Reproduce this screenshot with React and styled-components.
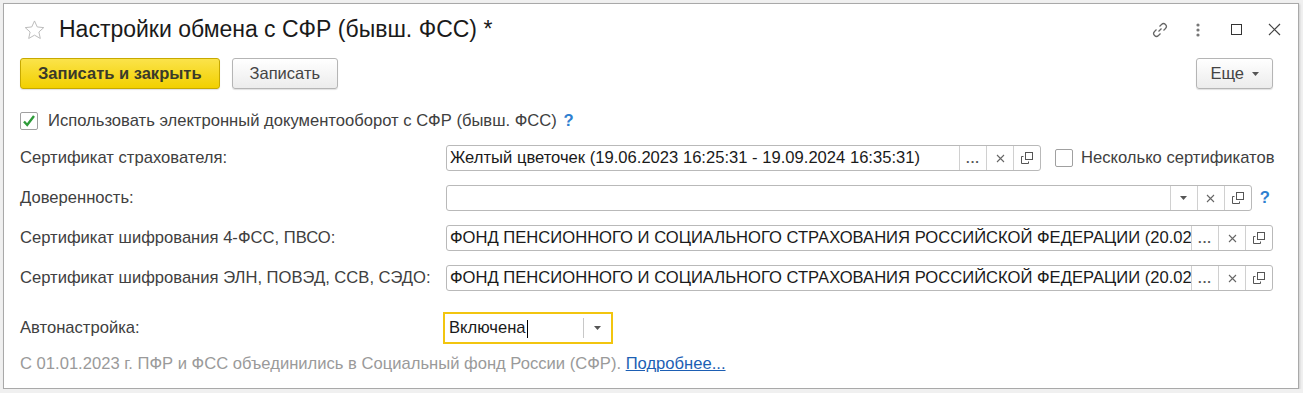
import React from "react";
import styled, { createGlobalStyle } from "styled-components";

const Global = createGlobalStyle`
  html, body {
    margin: 0;
    padding: 0;
    background: #f0f0f0;
    font-family: "Liberation Sans", Arial, sans-serif;
  }
`;

const Window = styled.div`
  margin: 3px 0 0 3px;
  width: 1296px;
  height: 386px;
  background: #fff;
  border: 1px solid #a9a9a9;
  box-shadow: 1px 1px 2px rgba(0, 0, 0, 0.15);
  padding: 0 25px 0 16px;
  box-sizing: border-box;
  color: #404040;
  font-size: 16.6px;
`;

const TitleBar = styled.div`
  display: flex;
  align-items: center;
  height: 51px;
  box-sizing: border-box;
`;

const Title = styled.div`
  flex: 1;
  margin-left: 14px;
  font-size: 23px;
  color: #1a1a1a;
  white-space: nowrap;
`;

const WinIcons = styled.div`
  display: flex;
  align-items: center;
  margin-right: -20px;
`;

const WinIcon = styled.div`
  width: 38px;
  height: 24px;
  display: flex;
  align-items: center;
  justify-content: center;
`;

const Toolbar = styled.div`
  display: flex;
  align-items: center;
  gap: 12px;
  height: 31px;
  margin-top: 3px;
`;

const Button = styled.button`
  height: 31px;
  padding: 0 ${(p) => p.$pad || 16}px;
  font-family: inherit;
  font-size: 16.5px;
  border-radius: 3px;
  cursor: pointer;
  border: 1px solid ${(p) => (p.$primary ? "#c7a900" : "#b5b5b5")};
  background: ${(p) =>
    p.$primary
      ? "linear-gradient(#fbe34a, #f2d000)"
      : "linear-gradient(#ffffff, #ececec)"};
  color: ${(p) => (p.$primary ? "#3a3a2a" : "#444")};
  font-weight: ${(p) => (p.$primary ? "bold" : "normal")};
  box-shadow: 0 1px 1px rgba(0, 0, 0, 0.12);
  display: flex;
  align-items: center;
  gap: 8px;
`;

const Spacer = styled.div`
  flex: 1;
`;

const CheckRow = styled.label`
  display: flex;
  align-items: center;
  height: 18px;
  margin-top: 23px;
  gap: 10px;
`;

const Box = styled.span`
  width: 16px;
  height: 16px;
  border: 1px solid #a0a0a0;
  border-radius: 2px;
  background: #fff;
  display: inline-flex;
  align-items: center;
  justify-content: center;
  flex-shrink: 0;
`;

const Help = styled.span`
  color: #2f7fd0;
  font-weight: bold;
  margin-left: 2px;
`;

const Form = styled.div`
  display: grid;
  grid-template-columns: 426px minmax(0, 1fr);
  row-gap: 14px;
  margin-top: 15px;
  align-items: center;
`;

const Label = styled.div`
  white-space: nowrap;
`;

const FieldLine = styled.div`
  display: flex;
  align-items: center;
  min-width: 0;
`;

const Field = styled.div`
  display: flex;
  align-items: stretch;
  height: 26px;
  box-sizing: border-box;
  border: 1px solid #b9b9b9;
  border-radius: 3px;
  background: #fff;
  min-width: 0;
  width: ${(p) => (p.$w ? `${p.$w}px` : "auto")};
  flex: ${(p) => (p.$w ? "none" : 1)};
`;

const Value = styled.div`
  flex: 1;
  min-width: 0;
  padding: 0 3px;
  line-height: 24px;
  color: #1a1a1a;
  white-space: nowrap;
  overflow: hidden;
`;

const FieldBtn = styled.div`
  width: 26px;
  flex-shrink: 0;
  border-left: 1px solid #d0d0d0;
  display: flex;
  align-items: center;
  justify-content: center;
  color: #555;
  font-size: 13px;
  font-weight: bold;
`;

const SideCheck = styled.label`
  display: flex;
  align-items: center;
  gap: 8px;
  margin-left: 14px;
  white-space: nowrap;
`;

const Focused = styled.div`
  display: flex;
  align-items: stretch;
  width: 170px;
  height: 32px;
  box-sizing: border-box;
  border: 2px solid #f2c50f;
  margin-left: -3px;
  margin-top: 7px;
`;

const Caret = styled.span`
  display: inline-block;
  width: 1px;
  height: 18px;
  background: #000;
  vertical-align: middle;
  margin-left: 1px;
`;

const DropBtn = styled.div`
  width: 28px;
  display: flex;
  align-items: center;
  justify-content: center;
  position: relative;
  &::before {
    content: "";
    position: absolute;
    left: 0;
    top: 4px;
    bottom: 4px;
    border-left: 1px solid #c8c8c8;
  }
`;

const Note = styled.div`
  margin-top: 10px;
  color: #9a9a9a;
  a {
    color: #1d5fb4;
    text-decoration: underline;
  }
`;

const Arrow = () => (
  <svg width="7" height="4" viewBox="0 0 7 4">
    <path d="M0 0h7L3.5 4z" fill="#555" />
  </svg>
);

const Cross = () => (
  <svg width="9" height="9" viewBox="0 0 9 9">
    <path d="M1 1l7 7M8 1L1 8" stroke="#666" strokeWidth="1.1" />
  </svg>
);

const Copy = () => (
  <svg width="12" height="12" viewBox="0 0 12 12" fill="none" stroke="#555" strokeWidth="1">
    <rect x="4.5" y="0.5" width="7" height="7" />
    <path d="M2.5 4.5h-2v7h7v-2" />
  </svg>
);

const Dots = () => <span style={{ letterSpacing: "1px" }}>...</span>;

const CertField = ({ value, w }) => (
  <Field $w={w}>
    <Value>{value}</Value>
    <FieldBtn>
      <Dots />
    </FieldBtn>
    <FieldBtn>
      <Cross />
    </FieldBtn>
    <FieldBtn>
      <Copy />
    </FieldBtn>
  </Field>
);

const fund =
  "ФОНД ПЕНСИОННОГО И СОЦИАЛЬНОГО СТРАХОВАНИЯ РОССИЙСКОЙ ФЕДЕРАЦИИ (20.02.2024 10:00:00 - 20.02.2025 10:00:00)";

export default function App() {
  return (
    <>
      <Global />
      <Window>
        <TitleBar>
          <svg width="21" height="20" viewBox="0 0 22 21" style={{ marginLeft: 4 }}>
            <path
              d="M11 1l2.9 6.3 6.8.7-5.1 4.6 1.5 6.8L11 15.9 4.9 19.4l1.5-6.8L1.3 8l6.8-.7z"
              fill="none"
              stroke="#b8b8b8"
              strokeWidth="1"
            />
          </svg>
          <Title>Настройки обмена с СФР (бывш. ФСС) *</Title>
          <WinIcons>
            <WinIcon>
              <svg width="18" height="18" viewBox="0 0 18 18" fill="none" stroke="#666" strokeWidth="1.2">
                <path d="M7.5 10.5l3-3" />
                <path d="M8.5 5.5l2-2a2.8 2.8 0 014 4l-2 2" />
                <path d="M9.5 12.5l-2 2a2.8 2.8 0 01-4-4l2-2" />
              </svg>
            </WinIcon>
            <WinIcon>
              <svg width="4" height="14" viewBox="0 0 4 14">
                <circle cx="2" cy="2" r="1.6" fill="#777" />
                <circle cx="2" cy="7" r="1.6" fill="#777" />
                <circle cx="2" cy="12" r="1.6" fill="#777" />
              </svg>
            </WinIcon>
            <WinIcon>
              <svg width="11" height="11" viewBox="0 0 11 11">
                <rect x="0.5" y="0.5" width="10" height="10" fill="none" stroke="#333" />
              </svg>
            </WinIcon>
            <WinIcon>
              <svg width="13" height="13" viewBox="0 0 13 13">
                <path d="M1 1l11 11M12 1L1 12" stroke="#444" strokeWidth="1.2" />
              </svg>
            </WinIcon>
          </WinIcons>
        </TitleBar>

        <Toolbar>
          <Button $primary $pad={17}>Записать и закрыть</Button>
          <Button $pad={17}>Записать</Button>
          <Spacer />
          <Button $pad={13}>
            Еще
            <Arrow />
          </Button>
        </Toolbar>

        <CheckRow>
          <Box>
            <svg width="14" height="14" viewBox="0 0 14 14">
              <path d="M2 7.5l3.2 3.5L12 2" fill="none" stroke="#2e9b3a" strokeWidth="2.4" />
            </svg>
          </Box>
          <span>
            Использовать электронный документооборот с СФР (бывш. ФСС) <Help>?</Help>
          </span>
        </CheckRow>

        <Form>
          <Label>Сертификат страхователя:</Label>
          <FieldLine>
            <CertField
              w={595}
              value="Желтый цветочек (19.06.2023 16:25:31 - 19.09.2024 16:35:31)"
            />
            <SideCheck>
              <Box />
              Несколько сертификатов
            </SideCheck>
          </FieldLine>

          <Label>Доверенность:</Label>
          <FieldLine>
            <Field>
              <Value />
              <FieldBtn>
                <Arrow />
              </FieldBtn>
              <FieldBtn>
                <Cross />
              </FieldBtn>
              <FieldBtn>
                <Copy />
              </FieldBtn>
            </Field>
            <Help style={{ margin: "0 3px 0 8px" }}>?</Help>
          </FieldLine>

          <Label>Сертификат шифрования 4-ФСС, ПВСО:</Label>
          <FieldLine>
            <CertField value={fund} />
          </FieldLine>

          <Label>Сертификат шифрования ЭЛН, ПОВЭД, ССВ, СЭДО:</Label>
          <FieldLine>
            <CertField value={fund} />
          </FieldLine>

          <Label style={{ marginTop: 7 }}>Автонастройка:</Label>
          <FieldLine>
            <Focused>
              <Value style={{ lineHeight: "28px", padding: "0 4px" }}>
                Включена
                <Caret />
              </Value>
              <DropBtn>
                <Arrow />
              </DropBtn>
            </Focused>
          </FieldLine>
        </Form>

        <Note>
          С 01.01.2023 г. ПФР и ФСС объединились в Социальный фонд России (СФР).{" "}
          <a href="#">Подробнее...</a>
        </Note>
      </Window>
    </>
  );
}
